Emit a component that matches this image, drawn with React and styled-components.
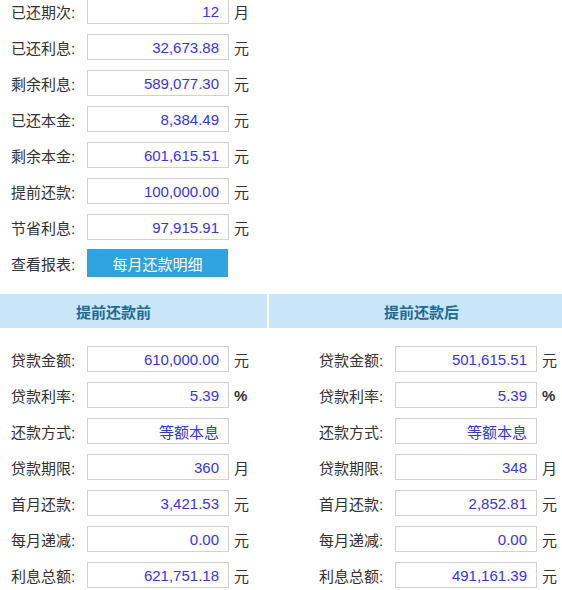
import styled, { createGlobalStyle } from 'styled-components';

const GlobalStyle = createGlobalStyle`
  body {
    margin: 0;
    background: #ffffff;
    font-family: "Liberation Sans", "Noto Sans CJK SC", sans-serif;
    font-size: 15px;
    color: #333333;
    overflow: hidden;
  }
`;

const Page = styled.div`
  width: 562px;
  height: 590px;
  overflow: hidden;
`;

const TopBlock = styled.div`
  margin-top: -7px;
  padding-left: 11px;
`;

const Row = styled.div`
  display: flex;
  align-items: center;
  height: 36px;
`;

const Label = styled.span`
  width: 76px;
  flex: none;
  white-space: nowrap;
  color: #333333;
`;

const ValueBox = styled.div`
  box-sizing: border-box;
  width: 142px;
  height: 26px;
  flex: none;
  border: 1px solid #d2d2d2;
  padding-right: 9px;
  display: flex;
  align-items: center;
  justify-content: flex-end;
  color: #3333ff;
`;

const Unit = styled.span`
  margin-left: 5px;
  color: #333333;
  font-weight: ${p => (p.$bold ? 'bold' : 'normal')};
`;

const ReportButton = styled.button`
  box-sizing: border-box;
  width: 141px;
  height: 28px;
  border: none;
  padding: 0;
  background: #2ea3df;
  color: #ffffff;
  font-family: inherit;
  font-size: 15px;
  cursor: pointer;
`;

const Compare = styled.div`
  margin-top: 13px;
  display: grid;
  grid-template-columns: 267px 1fr;
  column-gap: 2px;
`;

const HeadCell = styled.div`
  height: 34px;
  display: flex;
  align-items: center;
  padding-left: ${p => p.$indent}px;
  background: #c8e6f7;
  color: #1f6b94;
  font-weight: bold;
`;

const Column = styled.div`
  padding-top: 13px;
  padding-left: ${p => p.$indent}px;
`;

const topRows = [
  ['已还期次:', '12', '月'],
  ['已还利息:', '32,673.88', '元'],
  ['剩余利息:', '589,077.30', '元'],
  ['已还本金:', '8,384.49', '元'],
  ['剩余本金:', '601,615.51', '元'],
  ['提前还款:', '100,000.00', '元'],
  ['节省利息:', '97,915.91', '元'],
];

const before = ['610,000.00', '5.39', '等额本息', '360', '3,421.53', '0.00', '621,751.18'];
const after = ['501,615.51', '5.39', '等额本息', '348', '2,852.81', '0.00', '491,161.39'];

const compareLabels = [
  ['贷款金额:', '元'],
  ['贷款利率:', '%'],
  ['还款方式:', ''],
  ['贷款期限:', '月'],
  ['首月还款:', '元'],
  ['每月递减:', '元'],
  ['利息总额:', '元'],
];

const Field = ({ label, value, unit }) => (
  <Row>
    <Label>{label}</Label>
    <ValueBox>{value}</ValueBox>
    {unit && <Unit $bold={unit === '%'}>{unit}</Unit>}
  </Row>
);

const App = () => {
  return (
    <Page>
      <GlobalStyle />
      <TopBlock>
        {topRows.map(([label, value, unit]) => (
          <Field key={label} label={label} value={value} unit={unit} />
        ))}
        <Row>
          <Label>查看报表:</Label>
          <ReportButton>每月还款明细</ReportButton>
        </Row>
      </TopBlock>
      <Compare>
        <HeadCell $indent={76}>提前还款前</HeadCell>
        <HeadCell $indent={115}>提前还款后</HeadCell>
        <Column $indent={11}>
          {compareLabels.map(([label, unit], i) => (
            <Field key={label} label={label} value={before[i]} unit={unit} />
          ))}
        </Column>
        <Column $indent={50}>
          {compareLabels.map(([label, unit], i) => (
            <Field key={label} label={label} value={after[i]} unit={unit} />
          ))}
        </Column>
      </Compare>
    </Page>
  );
};

export default App;
